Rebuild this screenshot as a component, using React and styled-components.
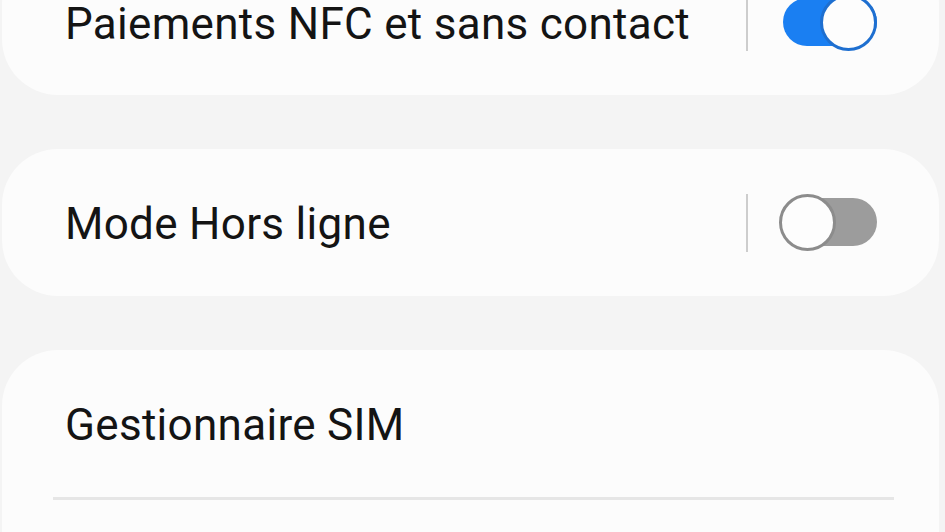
import React from 'react';
import styled, { createGlobalStyle } from 'styled-components';

const GlobalStyle = createGlobalStyle`
  html, body {
    margin: 0;
    padding: 0;
    background: #f4f4f4;
  }
  html {
    overflow: hidden;
  }
  body {
    font-family: Roboto, "Noto Sans", "Liberation Sans", sans-serif;
  }
`;

const Page = styled.div`
  display: flex;
  flex-direction: column;
  gap: 54px;
  margin-top: -51px;
  padding: 0 6px 0 2px;
  min-height: 640px;
`;

const Card = styled.div`
  background: #fcfcfc;
  border-radius: 56px;
  display: flex;
  flex-direction: column;
  flex-shrink: 0;
  min-height: ${(p) => p.$minHeight || 0}px;
`;

const Row = styled.div`
  height: ${(p) => p.$height || 147}px;
  display: flex;
  align-items: center;
  padding: 0 62px 0 63px;
`;

const Label = styled.div`
  flex: 1;
  font-size: 44px;
  color: #141414;
  letter-spacing: 0.3px;
  padding-top: ${(p) => p.$shift || 2}px;
`;

const Separator = styled.div`
  width: 2px;
  height: 58px;
  background: #cdcdcd;
  margin-right: 31px;
`;

const Toggle = styled.div`
  position: relative;
  width: 98px;
  height: 57px;
  flex-shrink: 0;
`;

const Track = styled.div`
  position: absolute;
  left: 4px;
  right: 0;
  top: 4px;
  height: 48px;
  border-radius: 24px;
  background: ${(p) => (p.$on ? '#1a7ff2' : '#9c9c9c')};
`;

const Thumb = styled.div`
  position: absolute;
  top: 0;
  ${(p) => (p.$on ? 'right: 0;' : 'left: 0;')}
  width: 57px;
  height: 57px;
  box-sizing: border-box;
  border-radius: 50%;
  background: #fdfdfd;
  border: ${(p) => (p.$on ? '3px solid #1e6fd0' : '3px solid #8c8c8c')};
`;

const Divider = styled.div`
  height: 3px;
  background: #e6e6e6;
  margin: 0 45px 0 51px;
`;

function Switch({ on }) {
  return (
    <Toggle>
      <Track $on={on} />
      <Thumb $on={on} />
    </Toggle>
  );
}

export default function App() {
  return (
    <>
      <GlobalStyle />
      <Page>
        <Card>
          <Row $height={146}>
            <Label $shift={4}>Paiements NFC et sans contact</Label>
            <Separator />
            <Switch on />
          </Row>
        </Card>
        <Card>
          <Row>
            <Label>Mode Hors ligne</Label>
            <Separator />
            <Switch on={false} />
          </Row>
        </Card>
        <Card $minHeight={260}>
          <Row>
            <Label>Gestionnaire SIM</Label>
          </Row>
          <Divider />
        </Card>
      </Page>
    </>
  );
}
